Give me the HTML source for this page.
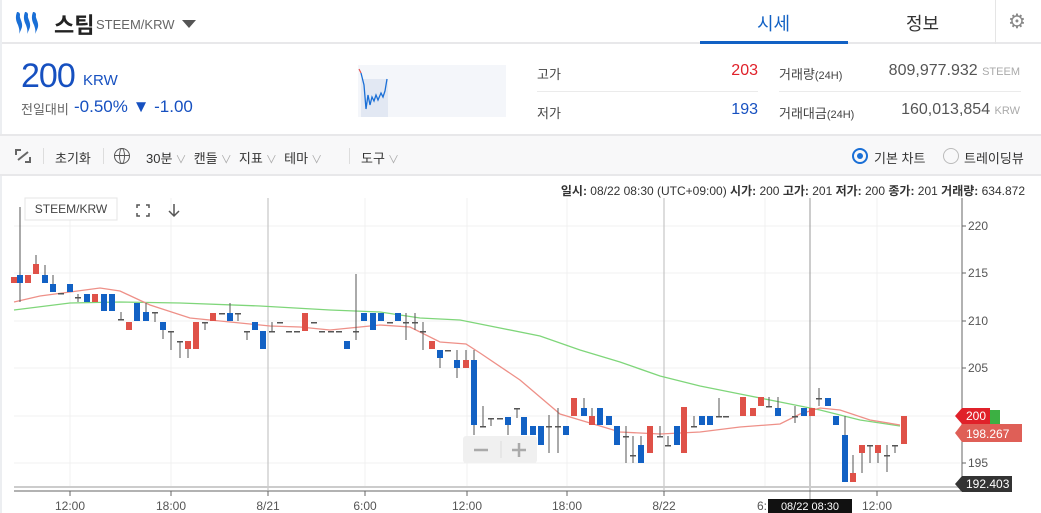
<!DOCTYPE html>
<html><head><meta charset="utf-8"><style>
*{margin:0;padding:0;box-sizing:border-box}
body{width:1041px;height:513px;overflow:hidden;background:#fff;font-family:"Liberation Sans","Noto Sans CJK KR",sans-serif;position:relative;color:#333}
.a{position:absolute;white-space:nowrap}
.c{color:#aaa;font-size:11px}
</style></head><body>
<div class="a" style="left:0;top:0;width:1041px;height:44px;border-bottom:2px solid #e8e8ea"></div>
<div class="a" style="left:0;top:0;width:2px;height:513px;background:#eceef1"></div>
<svg class="a" style="left:15px;top:10px" width="28" height="26" viewBox="0 0 28 26">
<g fill="#1a6fd6"><path d="M2 2c2 0 3 1 3 3c-1 3 3 7 2 12c-1 3-2 5-3 7c1-3 0-6-1-9c-2-4-3-8-1-13z"/><path d="M10 2c2 0 3 1 3 3c-1 3 3 7 2 12c-1 3-2 5-3 7c1-3 0-6-1-9c-2-4-3-8-1-13z"/><path d="M18 2c2 0 3 1 3 3c-1 3 3 7 2 12c-1 3-2 5-3 7c1-3 0-6-1-9c-2-4-3-8-1-13z"/></g></svg>
<div class="a" style="left:54px;top:8px;font-size:22px;font-weight:bold;color:#222">스팀</div>
<div class="a" style="left:96px;top:17px;font-size:13px;color:#666">STEEM/KRW</div>
<div class="a" style="left:182px;top:20px;width:0;height:0;border-left:7px solid transparent;border-right:7px solid transparent;border-top:8px solid #555"></div>
<div class="a" style="left:757px;top:10px;font-size:18px;color:#1261c4">시세</div>
<div class="a" style="left:700px;top:41px;width:148px;height:3px;background:#1261c4"></div>
<div class="a" style="left:906px;top:10px;font-size:18px;color:#333">정보</div>
<div class="a" style="left:995px;top:0;width:1px;height:44px;background:#e5e5e5"></div>
<div class="a" style="left:1008px;top:9px;font-size:20px;color:#888">⚙</div>
<div class="a" style="left:21px;top:57px;font-size:34px;color:#1650c0;letter-spacing:-1px">200</div>
<div class="a" style="left:83px;top:72px;font-size:15px;color:#1650c0">KRW</div>
<div class="a" style="left:21px;top:99px;font-size:13px;color:#666">전일대비</div>
<div class="a" style="left:74px;top:97px;font-size:17px;color:#1650c0">-0.50% ▼ -1.00</div>
<svg class="a" style="left:358px;top:65px" width="148" height="52"><rect width="148" height="52" fill="#f4f6fa"/><rect x="3" y="14" width="27" height="38" fill="#e2e8f3"/><path d="M1 4 L3 8" stroke="#e05050" stroke-width="1.2"/><path d="M3 8 L6 20 L8 44 L10 30 L12 40 L14 32 L16 36 L18 30 L20 35 L23 28 L25 32 L27 26 L29 14" fill="none" stroke="#1a6fd6" stroke-width="1.3"/></svg>
<div class="a" style="left:537px;top:64px;font-size:13px;color:#444">고가</div>
<div class="a" style="left:720px;top:62px;font-size:16px;color:#e0212a;width:38px;text-align:right">203</div>
<div class="a" style="left:537px;top:91px;width:221px;height:1px;background:#ebebeb"></div>
<div class="a" style="left:537px;top:103px;font-size:13px;color:#444">저가</div>
<div class="a" style="left:720px;top:101px;font-size:16px;color:#1650c0;width:38px;text-align:right">193</div>
<div class="a" style="left:779px;top:64px;font-size:13px;color:#444">거래량<span style="font-size:11px">(24H)</span></div>
<div class="a" style="left:840px;top:62px;width:180px;text-align:right;font-size:16px;color:#555">809,977.932 <span style="font-size:11px;color:#aaa">STEEM</span></div>
<div class="a" style="left:779px;top:91px;width:242px;height:1px;background:#ebebeb"></div>
<div class="a" style="left:779px;top:103px;font-size:13px;color:#444">거래대금<span style="font-size:11px">(24H)</span></div>
<div class="a" style="left:840px;top:101px;width:180px;text-align:right;font-size:16px;color:#555">160,013,854 <span style="font-size:11px;color:#aaa">KRW</span></div>
<div class="a" style="left:0;top:134px;width:1041px;height:42px;background:#f8f8f9;border-top:2px solid #e8e8ea;border-bottom:2px solid #e8e8ea"></div>
<svg class="a" style="left:15px;top:149px" width="16" height="14"><g fill="#666"><rect x="0" y="0" width="6" height="2"/><rect x="0" y="0" width="2" height="6"/><rect x="10" y="12" width="6" height="2"/><rect x="14" y="8" width="2" height="6"/></g><path d="M3 11L13 3" stroke="#666" stroke-width="2"/></svg>
<div class="a" style="left:43px;top:148px;width:1px;height:16px;background:#ddd"></div>
<div class="a" style="left:55px;top:148px;font-size:13px;color:#333">초기화</div>
<div class="a" style="left:103px;top:148px;width:1px;height:16px;background:#ddd"></div>
<div class="a" style="left:114px;top:148px;width:16px;height:16px;border:1.5px solid #555;border-radius:50%"></div>
<div class="a" style="left:119px;top:148px;width:6px;height:16px;border:1.2px solid #555;border-radius:50%"></div>
<div class="a" style="left:115px;top:155px;width:14px;height:1px;background:#555"></div>
<div class="a" style="left:146px;top:148px;font-size:13px;color:#333">30분<span class="c"> ∨</span>&nbsp;&nbsp;캔들<span class="c"> ∨</span>&nbsp;&nbsp;지표<span class="c"> ∨</span>&nbsp;&nbsp;테마<span class="c"> ∨</span></div>
<div class="a" style="left:349px;top:148px;width:1px;height:16px;background:#ddd"></div>
<div class="a" style="left:361px;top:148px;font-size:13px;color:#333">도구<span class="c"> ∨</span></div>
<div class="a" style="left:852px;top:148px;width:16px;height:16px;border:2px solid #1a6fd6;border-radius:50%"></div>
<div class="a" style="left:857px;top:153px;width:6px;height:6px;background:#1a6fd6;border-radius:50%"></div>
<div class="a" style="left:874px;top:148px;font-size:13px;color:#333">기본 차트</div>
<div class="a" style="left:943px;top:148px;width:16px;height:16px;border:1.5px solid #bbb;border-radius:50%"></div>
<div class="a" style="left:964px;top:148px;font-size:13px;color:#333">트레이딩뷰</div>
<div class="a" style="left:400px;top:182px;width:625px;text-align:right;font-size:12px;color:#333"><b>일시:</b> 08/22 08:30 (UTC+09:00) <b>시가:</b> 200 <b>고가:</b> 201 <b>저가:</b> 200 <b>종가:</b> 201 <b>거래량:</b> 634.872</div>
<svg class="a" style="left:0;top:0" width="1041" height="513">
<g stroke="#f1f1f1" stroke-width="1"><line x1="14" y1="226" x2="960" y2="226"/><line x1="14" y1="273" x2="960" y2="273"/><line x1="14" y1="321" x2="960" y2="321"/><line x1="14" y1="368" x2="960" y2="368"/><line x1="14" y1="416" x2="960" y2="416"/><line x1="14" y1="463" x2="960" y2="463"/>
<line x1="70" y1="198" x2="70" y2="487"/><line x1="171" y1="198" x2="171" y2="487"/><line x1="365" y1="198" x2="365" y2="487"/><line x1="467" y1="198" x2="467" y2="487"/><line x1="567" y1="198" x2="567" y2="487"/><line x1="765" y1="198" x2="765" y2="487"/><line x1="877" y1="198" x2="877" y2="487"/></g>
<g stroke="#bbb"><line x1="268" y1="198" x2="268" y2="490"/><line x1="664" y1="198" x2="664" y2="490"/></g>
<line x1="810" y1="198" x2="810" y2="500" stroke="#999"/>
<polyline fill="none" stroke="#7fd67a" stroke-width="1.3" points="14,310 70,303 120,302 180,303 260,306 330,310 380,312 420,318 460,320 500,328 540,336 580,350 620,362 660,376 700,386 740,394 780,402 820,410 860,420 900,426"/>
<polyline fill="none" stroke="#ee9088" stroke-width="1.3" points="14,302 40,296 70,292 100,288 120,291 150,305 190,318 230,322 270,326 300,327 330,330 350,328 380,325 410,327 440,342 466,344 480,353 520,380 560,414 620,432 660,434 700,432 740,427 780,424 800,414 820,408 840,410 870,420 900,425"/>
<g stroke="#555" stroke-width="1">
<line x1="20" y1="207" x2="20" y2="302"/><line x1="36" y1="255" x2="36" y2="264"/><line x1="45" y1="265" x2="45" y2="275"/><line x1="53" y1="275" x2="53" y2="284"/><line x1="78" y1="294" x2="78" y2="302"/><line x1="121" y1="312" x2="121" y2="320"/><line x1="146" y1="303" x2="146" y2="312"/><line x1="155" y1="312" x2="155" y2="322"/><line x1="163" y1="330" x2="163" y2="339"/><line x1="171" y1="331" x2="171" y2="350"/><line x1="180" y1="341" x2="180" y2="358"/><line x1="188" y1="349" x2="188" y2="358"/><line x1="205" y1="322" x2="205" y2="330"/><line x1="230" y1="303" x2="230" y2="313"/><line x1="238" y1="313" x2="238" y2="321"/><line x1="247" y1="331" x2="247" y2="340"/><line x1="272" y1="322" x2="272" y2="331"/><line x1="356" y1="274" x2="356" y2="340"/><line x1="406" y1="313" x2="406" y2="340"/><line x1="415" y1="313" x2="415" y2="330"/><line x1="423" y1="322" x2="423" y2="350"/><line x1="440" y1="358" x2="440" y2="368"/><line x1="457" y1="350" x2="457" y2="378"/><line x1="466" y1="350" x2="466" y2="360"/><line x1="474" y1="350" x2="474" y2="435"/><line x1="483" y1="406" x2="483" y2="426"/><line x1="491" y1="418" x2="491" y2="426"/><line x1="508" y1="425" x2="508" y2="435"/><line x1="517" y1="408" x2="517" y2="418"/><line x1="549" y1="415" x2="549" y2="453"/><line x1="558" y1="408" x2="558" y2="453"/><line x1="584" y1="398" x2="584" y2="408"/><line x1="592" y1="408" x2="592" y2="416"/><line x1="626" y1="426" x2="626" y2="463"/><line x1="633" y1="436" x2="633" y2="463"/><line x1="641" y1="436" x2="641" y2="445"/><line x1="660" y1="426" x2="660" y2="436"/><line x1="668" y1="436" x2="668" y2="445"/><line x1="694" y1="416" x2="694" y2="426"/><line x1="719" y1="398" x2="719" y2="416"/><line x1="769" y1="397" x2="769" y2="406"/><line x1="778" y1="397" x2="778" y2="408"/><line x1="795" y1="406" x2="795" y2="423"/><line x1="819" y1="388" x2="819" y2="406"/><line x1="845" y1="416" x2="845" y2="435"/><line x1="853" y1="455" x2="853" y2="473"/><line x1="862" y1="445" x2="862" y2="473"/><line x1="870" y1="445" x2="870" y2="463"/><line x1="878" y1="445" x2="878" y2="463"/><line x1="887" y1="445" x2="887" y2="472"/><line x1="895" y1="445" x2="895" y2="453"/>
</g>
<g fill="#555">
<rect x="58" y="293" width="6" height="1.5"/><rect x="75" y="297" width="6" height="1.5"/><rect x="118" y="319" width="6" height="1.5"/><rect x="152" y="312" width="6" height="1.5"/><rect x="168" y="331" width="6" height="1.5"/><rect x="177" y="341" width="6" height="1.5"/><rect x="202" y="322" width="6" height="1.5"/><rect x="219" y="313" width="6" height="1.5"/><rect x="235" y="313" width="6" height="1.5"/><rect x="244" y="331" width="6" height="1.5"/><rect x="269" y="331" width="6" height="1.5"/><rect x="277" y="322" width="6" height="1.5"/><rect x="286" y="331" width="6" height="1.5"/><rect x="294" y="331" width="6" height="1.5"/><rect x="311" y="322" width="6" height="1.5"/><rect x="319" y="331" width="6" height="1.5"/><rect x="328" y="331" width="6" height="1.5"/><rect x="336" y="331" width="6" height="1.5"/><rect x="353" y="331" width="6" height="1.5"/><rect x="387" y="322" width="6" height="1.5"/><rect x="403" y="322" width="6" height="1.5"/><rect x="412" y="322" width="6" height="1.5"/><rect x="420" y="331" width="6" height="1.5"/><rect x="445" y="350" width="6" height="1.5"/><rect x="480" y="426" width="6" height="1.5"/><rect x="488" y="418" width="6" height="1.5"/><rect x="497" y="418" width="6" height="1.5"/><rect x="514" y="408" width="6" height="1.5"/><rect x="546" y="426" width="6" height="1.5"/><rect x="555" y="426" width="6" height="1.5"/><rect x="623" y="436" width="6" height="1.5"/><rect x="630" y="455" width="6" height="1.5"/><rect x="657" y="436" width="6" height="1.5"/><rect x="665" y="445" width="6" height="1.5"/><rect x="691" y="426" width="6" height="1.5"/><rect x="716" y="416" width="6" height="1.5"/><rect x="723" y="416" width="6" height="1.5"/><rect x="766" y="406" width="6" height="1.5"/><rect x="792" y="416" width="6" height="1.5"/><rect x="816" y="398" width="6" height="1.5"/><rect x="867" y="445" width="6" height="1.5"/><rect x="884" y="455" width="6" height="1.5"/><rect x="892" y="445" width="6" height="1.5"/>
</g>
<g fill="#df5148">
<rect x="11" y="277" width="6" height="6"/><rect x="25" y="275" width="6" height="8"/><rect x="33" y="264" width="6" height="10"/><rect x="92" y="294" width="6" height="8"/><rect x="126" y="322" width="6" height="8"/><rect x="185" y="341" width="6" height="8"/><rect x="193" y="322" width="6" height="27"/><rect x="210" y="313" width="6" height="8"/><rect x="302" y="313" width="6" height="18"/><rect x="429" y="341" width="6" height="8"/><rect x="463" y="360" width="6" height="8"/><rect x="571" y="398" width="6" height="18"/><rect x="589" y="416" width="6" height="9"/><rect x="647" y="426" width="6" height="27"/><rect x="681" y="407" width="6" height="46"/><rect x="740" y="397" width="6" height="19"/><rect x="750" y="408" width="6" height="8"/><rect x="758" y="397" width="6" height="9"/><rect x="809" y="408" width="6" height="8"/><rect x="850" y="473" width="6" height="9"/><rect x="859" y="445" width="6" height="8"/><rect x="875" y="445" width="6" height="8"/><rect x="901" y="416" width="6" height="28"/>
</g>
<g fill="#1261c4">
<rect x="17" y="275" width="6" height="8"/><rect x="42" y="275" width="6" height="8"/><rect x="50" y="284" width="6" height="8"/><rect x="67" y="284" width="6" height="8"/><rect x="84" y="294" width="6" height="8"/><rect x="101" y="294" width="6" height="17"/><rect x="109" y="294" width="6" height="17"/><rect x="134" y="303" width="6" height="18"/><rect x="143" y="312" width="6" height="9"/><rect x="160" y="322" width="6" height="8"/><rect x="227" y="313" width="6" height="8"/><rect x="252" y="322" width="6" height="8"/><rect x="260" y="331" width="6" height="18"/><rect x="344" y="341" width="6" height="8"/><rect x="361" y="313" width="6" height="8"/><rect x="370" y="313" width="6" height="17"/><rect x="378" y="313" width="6" height="8"/><rect x="395" y="313" width="6" height="8"/><rect x="437" y="350" width="6" height="8"/><rect x="454" y="360" width="6" height="8"/><rect x="471" y="360" width="6" height="65"/><rect x="505" y="417" width="6" height="8"/><rect x="521" y="417" width="6" height="18"/><rect x="530" y="426" width="6" height="9"/><rect x="538" y="426" width="6" height="19"/><rect x="563" y="426" width="6" height="9"/><rect x="581" y="408" width="6" height="8"/><rect x="597" y="408" width="6" height="17"/><rect x="606" y="416" width="6" height="9"/><rect x="614" y="426" width="6" height="19"/><rect x="638" y="445" width="6" height="18"/><rect x="674" y="426" width="6" height="19"/><rect x="699" y="416" width="6" height="9"/><rect x="707" y="416" width="6" height="9"/><rect x="775" y="408" width="6" height="8"/><rect x="801" y="408" width="6" height="8"/><rect x="825" y="398" width="6" height="8"/><rect x="833" y="416" width="6" height="9"/><rect x="842" y="435" width="6" height="47"/>
</g>
<line x1="962" y1="198" x2="962" y2="490" stroke="#666"/>
<line x1="14" y1="487" x2="962" y2="487" stroke="#ccc" stroke-width="2"/>
<line x1="14" y1="491" x2="962" y2="491" stroke="#666"/>
<g stroke="#666"><line x1="962" y1="226" x2="966" y2="226"/><line x1="962" y1="273" x2="966" y2="273"/><line x1="962" y1="321" x2="966" y2="321"/><line x1="962" y1="368" x2="966" y2="368"/><line x1="962" y1="463" x2="966" y2="463"/>
<line x1="70" y1="491" x2="70" y2="496"/><line x1="171" y1="491" x2="171" y2="496"/><line x1="268" y1="491" x2="268" y2="496"/><line x1="365" y1="491" x2="365" y2="496"/><line x1="467" y1="491" x2="467" y2="496"/><line x1="567" y1="491" x2="567" y2="496"/><line x1="664" y1="491" x2="664" y2="496"/><line x1="877" y1="491" x2="877" y2="496"/></g>
<g font-family="Liberation Sans" font-size="12" fill="#555"><text x="968" y="230">220</text><text x="968" y="277">215</text><text x="968" y="325">210</text><text x="968" y="372">205</text><text x="968" y="467">195</text>
<g text-anchor="middle"><text x="70" y="510">12:00</text><text x="171" y="510">18:00</text><text x="268" y="510">8/21</text><text x="365" y="510">6:00</text><text x="467" y="510">12:00</text><text x="567" y="510">18:00</text><text x="664" y="510">8/22</text><text x="762" y="510">6:</text><text x="877" y="510">12:00</text></g></g>
<path d="M962,416 L970,410 L1000,410 L1000,432 L970,432 Z" fill="#3cb043"/>
<path d="M955,416 L962,408 L990,408 L990,424 L962,424 Z" fill="#e0212a"/>
<text x="966" y="420" font-family="Liberation Sans" font-size="12" fill="#fff">200</text>
<path d="M955,433 L962,424 L1022,424 L1022,442 L962,442 Z" fill="#df5f57"/>
<text x="966" y="438" font-family="Liberation Sans" font-size="12" fill="#fff">198.267</text>
<path d="M955,484 L962,476 L1012,476 L1012,492 L962,492 Z" fill="#333"/>
<text x="966" y="488" font-family="Liberation Sans" font-size="12" fill="#fff">192.403</text>
<rect x="768" y="499" width="84" height="14" fill="#111"/>
<text x="810" y="510" text-anchor="middle" font-family="Liberation Sans" font-size="11" fill="#fff">08/22 08:30</text>
<rect x="463" y="436" width="74" height="27" rx="3" fill="#f0f0f0"/>
<line x1="501" y1="441" x2="501" y2="458" stroke="#ddd"/>
<g stroke="#aaa" stroke-width="2.5"><line x1="474" y1="450" x2="488" y2="450"/><line x1="512" y1="450" x2="526" y2="450"/><line x1="519" y1="443" x2="519" y2="457"/></g>
<rect x="25" y="198" width="92" height="22" fill="#fff" stroke="#e5e5e5"/>
<text x="71" y="213" text-anchor="middle" font-family="Liberation Sans" font-size="12" fill="#444">STEEM/KRW</text>
<g stroke="#555" stroke-width="1.5" fill="none"><path d="M137 208v-3h3M146 205h3v3M149 213v3h-3M140 216h-3v-3"/><path d="M174 204v12M169 211l5 5 5-5"/></g>
</svg>
</body></html>
